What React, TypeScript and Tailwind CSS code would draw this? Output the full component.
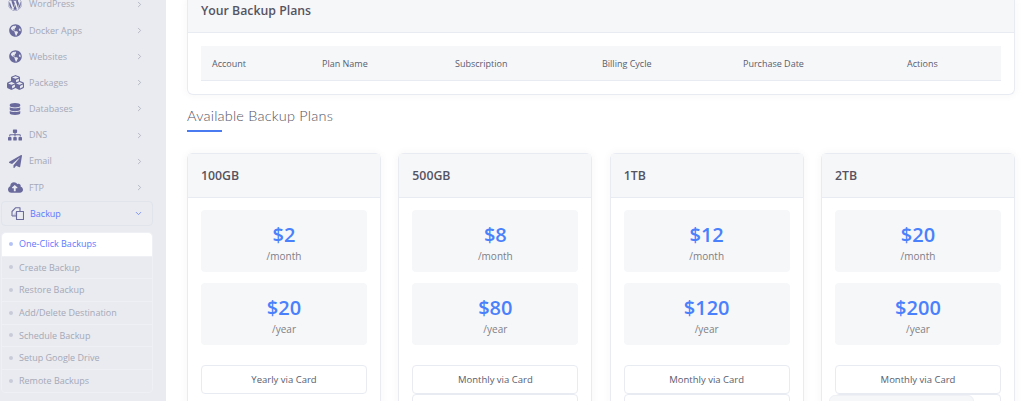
import { FaCloudUploadAlt, FaCubes, FaDatabase, FaGlobeAmericas, FaPaperPlane, FaSitemap, FaWordpress } from "react-icons/fa";
import { ChevronDown, ChevronRight } from "lucide-react";

const menu = [
  { label: "WordPress", icon: <FaWordpress size={14} /> },
  { label: "Docker Apps", icon: <FaGlobeAmericas size={13} /> },
  { label: "Websites", icon: <FaGlobeAmericas size={13} /> },
  { label: "Packages", icon: <FaCubes size={17} /> },
  { label: "Databases", icon: <FaDatabase size={12} /> },
  { label: "DNS", icon: <FaSitemap size={14} /> },
  { label: "Email", icon: <FaPaperPlane size={13} /> },
  { label: "FTP", icon: <FaCloudUploadAlt size={15} /> },
];

const subMenu = ["Create Backup", "Restore Backup", "Add/Delete Destination", "Schedule Backup", "Setup Google Drive", "Remote Backups"];

const columns = [
  { label: "Account", width: "w-[110px]" },
  { label: "Plan Name", width: "w-[133px]" },
  { label: "Subscription", width: "w-[147px]" },
  { label: "Billing Cycle", width: "w-[141px]" },
  { label: "Purchase Date", width: "w-[164px]" },
  { label: "Actions", width: "" },
];

const plans = [
  { name: "100GB", month: "$2", year: "$20", action: "Yearly via Card", second: false },
  { name: "500GB", month: "$8", year: "$80", action: "Monthly via Card", second: true },
  { name: "1TB", month: "$12", year: "$120", action: "Monthly via Card", second: true },
  { name: "2TB", month: "$20", year: "$200", action: "Monthly via Card", second: true },
];

function BackupIcon() {
  return (
    <svg width="13" height="13" viewBox="0 0 13 13" fill="none" stroke="#6a6a9c" strokeWidth="1.1" strokeLinejoin="round">
      <path d="M5.5 4.5h7v8h-7z" />
      <path d="M1 9V4.5L4.5 .8H9v3.7" />
      <path d="M1 9h4.5V4.5" fill="#a9aac6" fillOpacity="0.5" />
    </svg>
  );
}

function Price({ amount, period }: { amount: string; period: string }) {
  return (
    <div className="flex h-[62px] flex-col items-center rounded bg-[#f6f7f9] pt-[12px]">
      <div className="text-[20px] font-semibold leading-[26px] text-[#4a80fb]">{amount}</div>
      <div className="pt-[1px] text-[10px] leading-[14px] text-[#7e7e86]">{period}</div>
    </div>
  );
}

function PlanCard({ plan }: { plan: (typeof plans)[number] }) {
  return (
    <div className="w-[194px] shrink-0 rounded-t-md border border-[#e8ebf2] bg-white shadow-[0_0_8px_rgba(82,63,105,0.05)]">
      <div className="flex h-[44px] items-center border-b border-[#e8ebf2] bg-[#f6f7f9] px-[13px] pt-[1px] text-[12.3px] font-semibold text-[#55535f]">
        {plan.name}
      </div>
      <div className="flex flex-col px-[13px] pt-[12px]">
        <Price amount={plan.month} period="/month" />
        <div className="mt-[11px]">
          <Price amount={plan.year} period="/year" />
        </div>
        <div className="mt-[20px] flex h-[29px] items-center justify-center rounded border border-[#e8ebf2] pt-[1px] text-[9.5px] text-[#595d6e]">
          {plan.action}
        </div>
        {plan.second && <div className="h-[29px] rounded border border-[#e8ebf2]" />}
      </div>
    </div>
  );
}

export default function App() {
  return (
    <div className="relative flex h-[401px] w-[1024px] overflow-hidden bg-white font-['Open_Sans',sans-serif]">
      <aside className="w-[166px] shrink-0 bg-[#e9ebf1]">
        <nav className="-mt-[9px]">
          {menu.map((item) => (
            <div key={item.label} className="flex h-[26.2px] items-center pr-[22px]">
              <span className="flex w-[29px] shrink-0 justify-center pl-[1px] text-[#6a6a9c]">{item.icon}</span>
              <span className="text-[9px] text-[#a5a8b6]">{item.label}</span>
              <ChevronRight size={9} className="ml-auto text-[#a5a8b6]" />
            </div>
          ))}
        </nav>
        <div className="ml-[1px] flex h-[25px] w-[152px] items-center rounded border border-[#e2e4ec] pr-[9px]">
          <span className="flex w-[28px] shrink-0 justify-center pl-[2px]">
            <BackupIcon />
          </span>
          <span className="pt-[1px] text-[9px] text-[#5d78ff]">Backup</span>
          <ChevronDown size={9} className="ml-auto text-[#5d78ff]" />
        </div>
        <div className="ml-[1px] mt-[6px] w-[152px] rounded border border-[#eff0f5]">
          <div className="flex h-[23px] items-center rounded-t bg-white pl-[7px]">
            <span className="mr-[6px] h-1 w-1 rounded-full bg-[#b4c3f5]" />
            <span className="text-[9px] text-[#5d78ff]">One-Click Backups</span>
          </div>
          {subMenu.map((item) => (
            <div key={item} className="flex h-[22.7px] items-center border-t border-[#eff0f5] pl-[7px]">
              <span className="mr-[6px] h-1 w-1 rounded-full bg-[#c9ccd8]" />
              <span className="text-[9px] text-[#a5a8b6]">{item}</span>
            </div>
          ))}
        </div>
      </aside>

      <main className="flex-1 pl-[21px] pr-[9px]">
        <div className="h-[95px] w-[828px] rounded-b-md border border-t-0 border-[#e8ebf2] bg-white shadow-[0_0_8px_rgba(82,63,105,0.05)]">
          <div className="flex h-[33px] items-center border-b border-[#e8ebf2] bg-[#f6f7f9] pb-[10px] pl-[13px] text-[12.3px] font-semibold text-[#55535f]">
            Your Backup Plans
          </div>
          <div className="mx-[13px] mt-[13px] flex h-[35px] items-center border-b border-[#e8ebf2] bg-[#f6f7f9] pl-[11px] pt-[1px] text-[9px] text-[#595d6e]">
            {columns.map((col) => (
              <div key={col.label} className={col.width}>
                {col.label}
              </div>
            ))}
          </div>
        </div>

        <h2 className="mt-[11px] font-['Lato',sans-serif] text-[14.5px] font-light leading-[20px] tracking-[0.2px] text-[#55535f]">
          Available Backup Plans
        </h2>
        <div className="mt-[4px] h-[2px] w-[35px] bg-[#4a7bf0]" />

        <div className="mt-[21px] flex gap-[17.33px]">
          {plans.map((plan) => (
            <PlanCard key={plan.name} plan={plan} />
          ))}
        </div>
      </main>

      {/* floating chip that sits over the 2TB card */}
      <div className="absolute left-[829px] top-[395px] h-[20px] w-[145px] rounded-t-md border border-[#eef0f5] bg-[#f6f7f9]" />
    </div>
  );
}
